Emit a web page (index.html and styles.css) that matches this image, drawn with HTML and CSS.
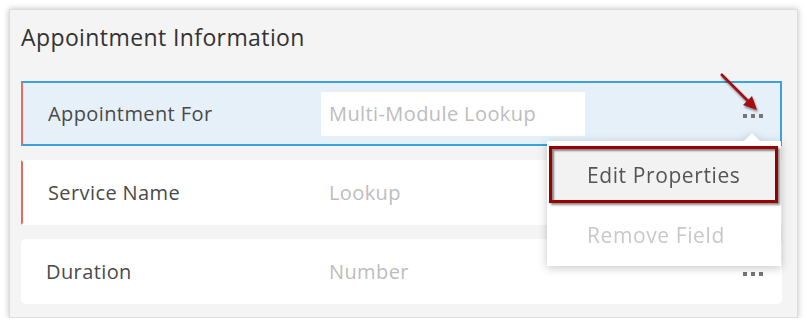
FILE: index.html
```html
<!DOCTYPE html>
<html lang="en">
<head>
    <meta charset="UTF-8">
    <meta name="viewport" content="width=device-width, initial-scale=1.0">
    <title>Appointment Information</title>
    <link rel="stylesheet" href="styles.css">
</head>
<body>
<div class="panel">
    <div class="panel-title">Appointment Information</div>

    <div class="fields">
        <div class="field field-active field-required">
            <div class="field-label">Appointment For</div>
            <div class="field-value field-input">Multi-Module Lookup</div>
            <div class="field-more"><span></span><span></span><span></span></div>
        </div>
        <div class="field field-required">
            <div class="field-label">Service Name</div>
            <div class="field-value">Lookup</div>
            <div class="field-more field-more-hidden"><span></span><span></span><span></span></div>
        </div>
        <div class="field field-plain">
            <div class="field-label">Duration</div>
            <div class="field-value">Number</div>
            <div class="field-more"><span></span><span></span><span></span></div>
        </div>
    </div>

    <!-- menu opened from the first field's "..." -->
    <div class="menu">
        <div class="menu-item menu-item-marked">Edit Properties</div>
        <div class="menu-item menu-item-disabled">Remove Field</div>
    </div>

    <svg class="pointer" width="46" height="46" viewBox="0 0 46 46">
        <line x1="5" y1="5" x2="33" y2="33" stroke="#a30f0f" stroke-width="2.5"/>
        <polygon points="41,41 27,36 36,27" fill="#a30f0f"/>
    </svg>
</div>
</body>
</html>
```

FILE: styles.css
```css
body {
    margin: 0;
    background-color: #ffffff;
    font-family: "Open Sans", Lato, sans-serif;
    letter-spacing: 0.4px;
}

.panel {
    position: relative;
    box-sizing: border-box;
    width: 789px;
    height: 309px;
    margin: 9px 0 0 9px;
    padding: 13px 15px 15px 11px;
    background-color: #f4f4f4;
    border: 1px solid #dedede;
    box-shadow: 0 0 6px rgba(0, 0, 0, 0.25);
}

.panel-title {
    height: 28px;
    line-height: 28px;
    font-size: 23px;
    color: #333;
    margin-bottom: 30px;
}

.fields {
    display: flex;
    flex-direction: column;
    gap: 14px;
}

.field {
    box-sizing: border-box;
    height: 65px;
    display: grid;
    grid-template-columns: 298px 1fr auto;
    align-items: center;
    background-color: #ffffff;
    border: 2px solid transparent;
}

.field-required {
    border-left-color: #e66b62;
}

.field-active {
    background-color: #e6f0f9;
    border-color: #3ba2dd;
    border-left-color: #e66b62;
}

.field-plain {
    border-radius: 5px;
}

.field-label {
    padding-left: 25px;
    font-size: 20px;
    color: #4a4a4a;
}

.field-plain .field-label {
    padding-left: 23px;
}

.field-value {
    padding-left: 8px;
    font-size: 20px;
    color: #bdbdbd;
}

.field-input {
    width: 264px;
    height: 44px;
    line-height: 44px;
    box-sizing: border-box;
    background-color: #ffffff;
}

.field-more {
    display: flex;
    gap: 4px;
    margin: 4px 17px 0 0;
}

.field-more span {
    width: 4px;
    height: 4px;
    background-color: #777;
}

.field-more-hidden {
    visibility: hidden;
}

.menu {
    position: absolute;
    left: 537px;
    top: 131px;
    width: 234px;
    height: 125px;
    box-sizing: border-box;
    padding: 5px 3px 0 2px;
    background-color: #ffffff;
    filter: drop-shadow(0 2px 5px rgba(0, 0, 0, 0.22));
}

.menu::before {
    content: "";
    position: absolute;
    left: 197px;
    top: -8px;
    border-left: 8px solid transparent;
    border-right: 8px solid transparent;
    border-bottom: 8px solid #ffffff;
}

.menu-item {
    box-sizing: border-box;
    height: 60px;
    padding-left: 38px;
    display: flex;
    align-items: center;
    font-size: 21px;
    letter-spacing: 0.6px;
    color: #555;
}

.menu-item-marked {
    height: 57px;
    padding-left: 35px;
    background-color: #f2f2f2;
    border: 3px solid #990000;
    box-shadow: 2px 2px 2px rgba(0, 0, 0, 0.45), inset 2px 2px 2px rgba(0, 0, 0, 0.45);
}

.menu-item-disabled {
    height: 63px;
    color: #c8c8c8;
}

.pointer {
    position: absolute;
    left: 706px;
    top: 59px;
    filter: drop-shadow(1px 2px 1px rgba(0, 0, 0, 0.45));
}
```
